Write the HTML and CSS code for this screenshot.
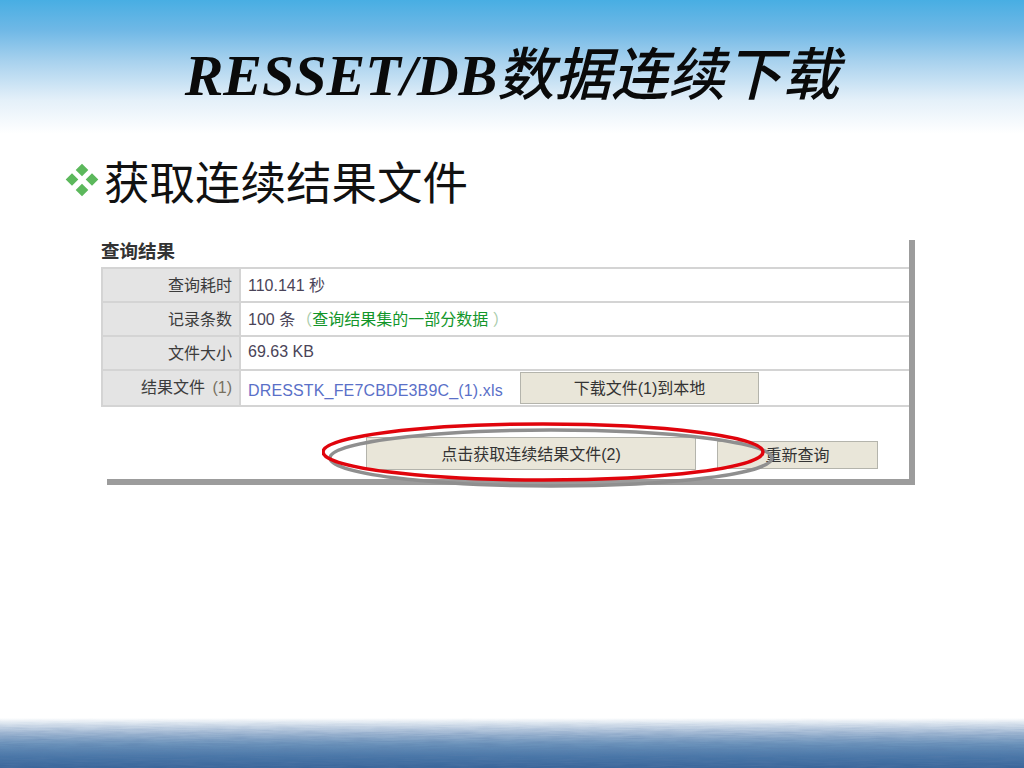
FILE: index.html
```html
<!doctype html>
<html lang="zh-CN">
  <head>
    <meta charset="UTF-8" />
    <title>RESSET/DB数据连续下载</title>
    <link rel="stylesheet" href="styles.css">
  </head>
  <body>
    <div class="slide">
      <header class="slide-head">
        <h1>RESSET/DB<span class="cjk">数据连续下载</span></h1>
      </header>

      <main class="slide-body">
        <div class="point">
          <svg class="bullet" width="34" height="34" viewBox="0 0 34 34">
            <path d="M17 .7l6.3 6.3-6.3 6.3-6.3-6.3zM17 20.7l6.3 6.3-6.3 6.3-6.3-6.3zM7 10.2l6.3 6.3-6.3 6.3-6.3-6.3zM27 10.2l6.3 6.3-6.3 6.3-6.3-6.3z" fill="#5cb85c" />
          </svg>
          <span>获取连续结果文件</span>
        </div>

        <div class="shot">
          <h2>查询结果</h2>
          <table class="result">
            <tr>
              <th>查询耗时</th>
              <td>110.141 秒</td>
            </tr>
            <tr>
              <th>记录条数</th>
              <td>100 条<span class="note"><i>（</i>查询结果集的一部分数据<i> ）</i></span></td>
            </tr>
            <tr>
              <th>文件大小</th>
              <td>69.63 KB</td>
            </tr>
            <tr class="file-row">
              <th>结果文件 <i>(1)</i></th>
              <td>
                <div class="file-cell">
                  <a href="#">DRESSTK_FE7CBDE3B9C_(1).xls</a>
                  <button class="btn btn-save">下载文件(1)到本地</button>
                </div>
              </td>
            </tr>
          </table>
          <div class="actions">
            <button class="btn btn-next">点击获取连续结果文件(2)</button>
            <button class="btn btn-reset">重新查询</button>
          </div>
          <!-- hand drawn ring over the button -->
          <svg class="ring" width="470" height="70" viewBox="0 0 470 70">
            <ellipse cx="229" cy="36" rx="221" ry="28" fill="none" stroke="#8f8f8f" stroke-width="3.5" />
            <ellipse cx="221" cy="30" rx="220" ry="28" fill="none" stroke="#e0040c" stroke-width="3.5" />
          </svg>
        </div>
      </main>

      <footer class="slide-foot">
        <svg class="water" width="1024" height="50">
          <filter id="ripple">
            <feTurbulence type="fractalNoise" baseFrequency="0.04 0.7" numOctaves="2" seed="4" />
            <feColorMatrix values="0 0 0 0 0.1  0 0 0 0 0.2  0 0 0 0 0.4  1.6 0 0 0 -0.55" />
          </filter>
          <rect width="1024" height="50" filter="url(#ripple)" />
        </svg>
      </footer>
    </div>
  </body>
</html>
```

FILE: styles.css
```css
body {
  margin: 0;
  background-color: #fff;
  font-family: 'Liberation Sans', 'Noto Sans CJK SC', sans-serif;
}
.slide {
  display: flex;
  flex-direction: column;
  height: 768px;
  overflow: hidden;
}
.slide-head {
  height: 135px;
  box-sizing: border-box;
  padding-top: 40px;
  background: linear-gradient(#48aee3 0, #6fb8e6 30px, #a9d2ee 62px, #e4f0f9 100px, #fff 134px);
}
h1 {
  margin: 0;
  text-align: center;
  font-family: 'Liberation Serif', 'Noto Sans CJK SC', serif;
  font-size: 58px;
  line-height: 72px;
  font-style: italic;
  font-weight: bold;
  color: #0a0a0a;
}
h1 .cjk {
  font-size: 57px;
  font-weight: 500;
}
.slide-body {
  flex: 1;
  padding: 21px 0 0 65px;
}
.point {
  display: flex;
  align-items: center;
  gap: 5px;
  height: 48px;
  font-family: 'Noto Sans CJK SC', sans-serif;
  font-size: 45.5px;
  line-height: 48px;
  color: #111;
}
.shot {
  position: relative;
  width: 808px;
  height: 239px;
  margin: 36px 0 0 36px;
  box-shadow: 6px 0 0 #9c9c9c, 6px 6px 0 #9c9c9c;
}
.shot h2 {
  margin: 0;
  height: 27px;
  font-size: 18.5px;
  line-height: 23px;
  font-weight: bold;
  color: #333;
}
.result {
  width: 808px;
  border-collapse: collapse;
  font-size: 16px;
  color: #4a4458;
}
.result tr {
  height: 34px;
}
.result th,
.result td {
  padding: 0 7px 2px;
  border-top: 2px solid #d4d4d4;
  border-bottom: 2px solid #d4d4d4;
}
.result th {
  width: 122px;
  text-align: right;
  font-weight: normal;
  color: #3c3c3c;
  background-color: #e4e4e4;
  border-left: 2px solid #d4d4d4;
  border-right: 2px solid #d4d4d4;
}
.result th i {
  font-style: normal;
  color: #77705f;
  margin-left: 3px;
}
.note {
  color: #12962a;
  margin-left: 1px;
}
.note i {
  font-style: normal;
  color: #a8ccaa;
}
.result .file-row {
  height: 36px;
}
.result .file-row th {
  padding-bottom: 5px;
}
.result .file-row td {
  padding-bottom: 0;
}
.file-cell {
  display: flex;
  align-items: center;
  justify-content: space-between;
  width: 511px;
}
.file-cell a {
  padding-top: 5px;
  color: #5a70c8;
  letter-spacing: 0.15px;
  text-decoration: none;
}
.btn {
  padding: 0 0 2px;
  font-family: inherit;
  font-size: 16px;
  color: #333;
  background-color: #e9e6d9;
  border: 1px solid #b4b4ac;
  border-radius: 0;
}
.btn-save {
  width: 239px;
  height: 32px;
}
.actions {
  display: flex;
  align-items: flex-start;
  gap: 21px;
  padding: 30px 0 0 265px;
}
.btn-next {
  width: 330px;
  height: 33px;
}
.btn-reset {
  width: 161px;
  height: 28px;
  margin-top: 4px;
}
.ring {
  position: absolute;
  left: 221px;
  top: 182px;
}
.slide-foot {
  height: 50px;
  background: linear-gradient(#fff 0, #d8e2ed 6px, #9db5d1 16px, #6c93bb 26px, #4a77a8 38px, #3a659a 50px);
}
.water {
  display: block;
  opacity: 0.45;
  -webkit-mask-image: linear-gradient(transparent 0, #000 30px);
  mask-image: linear-gradient(transparent 0, #000 30px);
}
```
